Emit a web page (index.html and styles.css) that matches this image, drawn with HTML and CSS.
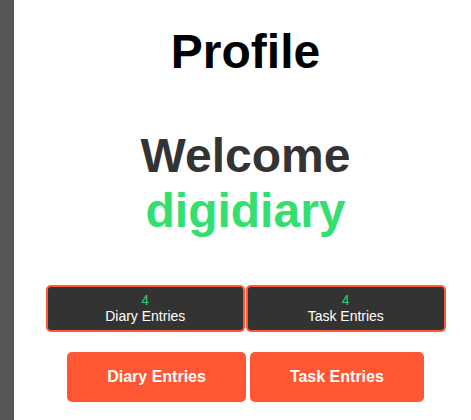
FILE: index.html
```html
<!DOCTYPE html>
<html lang="en">
<head>
<meta charset="utf-8">
<title>Profile</title>
<link rel="stylesheet" href="styles.css">
</head>
<body>
<div class="layout">
  <aside class="sidebar"></aside>
  <main class="main">
    <h1 class="title">Profile</h1>
    <h2 class="welcome">Welcome<br><span class="username">digidiary</span></h2>
    <div class="stats">
      <div class="stat">
        <div class="stat-num">4</div>
        <div class="stat-label">Diary Entries</div>
      </div>
      <div class="stat">
        <div class="stat-num">4</div>
        <div class="stat-label">Task Entries</div>
      </div>
    </div>
    <div class="actions">
      <a class="btn" href="#">Diary Entries</a>
      <a class="btn" href="#">Task Entries</a>
    </div>
  </main>
</div>
</body>
</html>
```
FILE: styles.css
```css
html, body {
  margin: 0;
  padding: 0;
  background: #ffffff;
  font-family: "Liberation Sans", Arial, sans-serif;
}

.layout {
  display: flex;
  min-height: 420px;
}

.sidebar {
  width: 14px;
  flex: none;
  background: #565656;
}

.main {
  flex: 1;
  padding-left: 6px;
  display: flex;
  flex-direction: column;
  align-items: center;
}

.title {
  margin: 24px 0 0;
  font-size: 48px;
  line-height: 55px;
  font-weight: bold;
  color: #000000;
}

.welcome {
  margin: 48.5px 0 0;
  font-size: 48px;
  line-height: 55px;
  font-weight: bold;
  color: #333333;
  text-align: center;
}

.username {
  color: #33e06f;
}

.stats {
  margin-top: 47.5px;
  width: 400px;
  display: flex;
  gap: 1px;
}

.stat {
  flex: 1;
  background: #333333;
  border: 2px solid #ff5733;
  border-radius: 5px;
  padding: 4.5px 0 5.5px;
  text-align: center;
  font-size: 14px;
  line-height: 16.5px;
}

.stat-num {
  color: #2ecc71;
}

.stat-label {
  color: #ffffff;
}

.actions {
  margin-top: 20px;
  display: flex;
  gap: 4px;
}

.btn {
  display: block;
  background: #ff5733;
  color: #ffffff;
  text-decoration: none;
  font-weight: bold;
  font-size: 16px;
  line-height: 18px;
  padding: 16px 40px;
  border-radius: 5px;
}
```
